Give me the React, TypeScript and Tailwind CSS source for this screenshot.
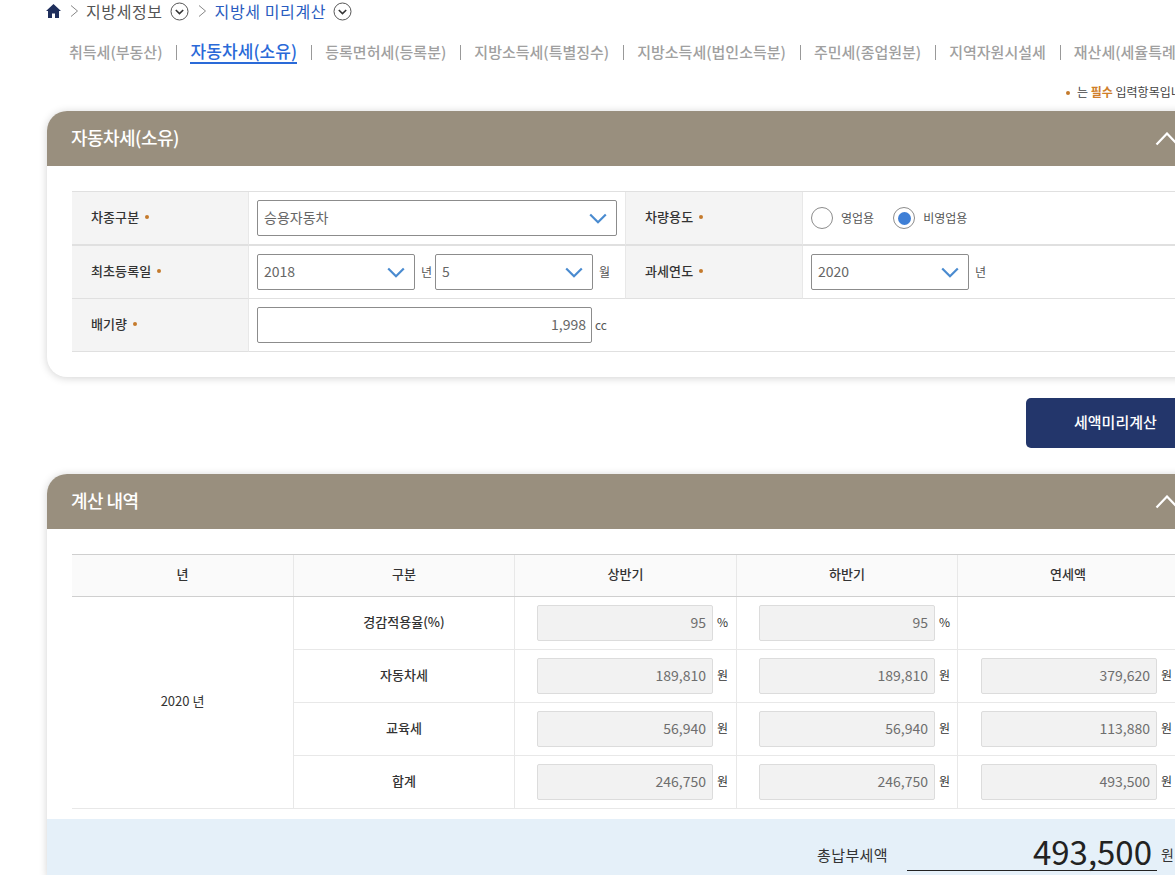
import type { ReactNode } from "react";

const FONT = "font-['Noto_Sans_CJK_KR','Noto_Sans',sans-serif]";

const tabs = [
  "취득세(부동산)",
  "자동차세(소유)",
  "등록면허세(등록분)",
  "지방소득세(특별징수)",
  "지방소득세(법인소득분)",
  "주민세(종업원분)",
  "지역자원시설세",
  "재산세(세율특례)",
];

const rows = [
  { label: "경감적용율(%)", unit: "%", first: "95", second: "95", total: "" },
  { label: "자동차세", unit: "원", first: "189,810", second: "189,810", total: "379,620" },
  { label: "교육세", unit: "원", first: "56,940", second: "56,940", total: "113,880" },
  { label: "합계", unit: "원", first: "246,750", second: "246,750", total: "493,500" },
];

function CircleDown() {
  return (
    <svg width="19" height="19" viewBox="0 0 19 19" fill="none" className="shrink-0">
      <circle cx="9.5" cy="9.5" r="8.5" stroke="#555" strokeWidth="1" />
      <path d="M5.8 8 9.5 11.6 13.2 8" stroke="#333" strokeWidth="1.6" />
    </svg>
  );
}

function Crumb() {
  return (
    <svg width="9" height="14" viewBox="0 0 9 14" fill="none" className="shrink-0">
      <path d="M1 1.5 7.5 7 1 12.5" stroke="#888" strokeWidth="1" />
    </svg>
  );
}

function Dot() {
  return <span className="ml-[6px] inline-block size-[4px] rounded-full bg-[#c47a2c]" />;
}

function Select({ value, width }: { value: string; width: string }) {
  return (
    <div className={`flex h-[36px] items-center justify-between rounded-[2px] border border-[#8c8c8c] bg-white pl-[6px] pr-[9px] ${width}`}>
      <span className="pb-[1px] text-[14px] text-[#666]">{value}</span>
      <svg width="18" height="11" viewBox="0 0 18 11" fill="none">
        <path d="M1.2 1.5 9 9.2 16.8 1.5" stroke="#4a8bd0" strokeWidth="2.2" />
      </svg>
    </div>
  );
}

function Radio({ label, checked }: { label: string; checked?: boolean }) {
  return (
    <div className="flex items-center gap-[8px]">
      <span className="flex size-[22px] items-center justify-center rounded-full border border-[#8c8c8c] bg-white">
        {checked && <span className="size-[13px] rounded-full bg-[#3f7fd6]" />}
      </span>
      <span className="pb-[1px] text-[12px] text-[#555]">{label}</span>
    </div>
  );
}

function Panel({ title, children }: { title: string; children: ReactNode }) {
  return (
    <section className="ml-[47px] w-[1200px] rounded-[20px] bg-white shadow-[0_1px_8px_rgba(0,0,0,0.18)]">
      <header className="flex h-[55px] items-center justify-between rounded-t-[20px] bg-[#998f7e] pl-[24px] pr-[68px]">
        <h2 className="pb-[3px] text-[18px] font-medium tracking-[-0.55px] text-white">{title}</h2>
        <svg width="24" height="14" viewBox="0 0 24 14" fill="none">
          <path d="M1.5 12.5 12 1.5 22.5 12.5" stroke="#fff" strokeWidth="2.2" />
        </svg>
      </header>
      {children}
    </section>
  );
}

function Label({ children, thick }: { children: ReactNode; thick?: boolean }) {
  return (
    <div
      className={`flex items-center border-r border-r-[#e8e8e8] border-b-[#e0e0e0] bg-[#f4f4f4] pb-[3px] pl-[19px] text-[13px] font-medium tracking-[0.1px] text-[#333] ${
        thick ? "border-b-2" : "border-b"
      }`}
    >
      {children}
      <Dot />
    </div>
  );
}

function ReadOnly({ value, unit, inset }: { value: string; unit: string; inset: string }) {
  return (
    <div className={`flex h-full items-center border-r border-[#e8e8e8] ${inset}`}>
      {value && (
        <>
          <div className="flex h-[36px] w-[176px] items-center justify-end rounded-[2px] border border-[#dcdcdc] bg-[#f2f2f2] pr-[6px] pb-[1px] text-[14px] text-[#6e6e6e]">
            {value}
          </div>
          <span className="ml-[4px] pb-[2px] text-[12px] text-[#333]">{unit}</span>
        </>
      )}
    </div>
  );
}

export default function App() {
  return (
    <div className={`relative h-[875px] w-[1175px] overflow-hidden bg-white ${FONT}`}>
      {/* Breadcrumb */}
      <nav className="flex h-[22px] items-center pl-[46px] text-[16px] tracking-[0.6px]">
        <svg width="15" height="14" viewBox="0 0 15 14" className="shrink-0">
          <path d="M7.5 0 15 7h-2v7H9V9.5H6V14H2V7H0z" fill="#1f2f5c" />
        </svg>
        <span className="ml-[9px]"><Crumb /></span>
        <span className="ml-[7px] text-[#555]">지방세정보</span>
        <span className="ml-[7px]"><CircleDown /></span>
        <span className="ml-[9px]"><Crumb /></span>
        <span className="ml-[8px] text-[#2a5cc0]">지방세 미리계산</span>
        <span className="ml-[7px]"><CircleDown /></span>
      </nav>

      {/* Tabs */}
      <ul className="mt-[18px] flex h-[24px] w-[1300px] items-center whitespace-nowrap pl-[69px] text-[15px] font-medium text-[#a0a0a0]">
        {tabs.map((tab, i) => (
          <li key={tab} className="flex items-center">
            {i > 0 && <span className="ml-[14px] mr-[13px] h-[15px] w-px bg-[#999]" />}
            {i === 1 ? (
              <span className="border-b-2 border-[#2a6ad8] text-[17px] leading-[22px] tracking-[0.1px] text-[#2a6ad8]">{tab}</span>
            ) : (
              <span>{tab}</span>
            )}
          </li>
        ))}
      </ul>

      <p className="mt-[18px] h-[20px] w-[200px] translate-x-[1066px] whitespace-nowrap text-[12px] leading-[20px] text-[#444]">
        <span className="mr-[7px] inline-block size-[4px] rounded-full bg-[#c47a2c] align-[2px]" />
        는 <span className="font-bold text-[#d07f2a]">필수</span> 입력항목입니다.
      </p>

      <div className="mt-[9px]">
        <Panel title="자동차세(소유)">
          <div className="p-[25px]">
            <div className="grid grid-cols-[177px_377px_177px_1fr] grid-rows-[54px_53px_53px] border-t border-[#e0e0e0]">
              <Label thick>차종구분</Label>
              <div className="flex items-center border-b-2 border-r border-b-[#e0e0e0] border-r-[#e8e8e8] pl-[8px]">
                <Select value="승용자동차" width="w-[360px]" />
              </div>
              <Label thick>차량용도</Label>
              <div className="flex items-center gap-[19px] border-b-2 border-[#e0e0e0] pl-[8px]">
                <Radio label="영업용" />
                <Radio label="비영업용" checked />
              </div>

              <Label>최초등록일</Label>
              <div className="flex items-center border-b border-r border-b-[#e0e0e0] border-r-[#e8e8e8] pl-[8px]">
                <Select value="2018" width="w-[158px]" />
                <span className="ml-[6px] text-[12px] text-[#555]">년</span>
                <span className="ml-[3px]"><Select value="5" width="w-[158px]" /></span>
                <span className="ml-[6px] text-[12px] text-[#555]">월</span>
              </div>
              <Label>과세연도</Label>
              <div className="flex items-center border-b border-[#e0e0e0] pl-[8px]">
                <Select value="2020" width="w-[158px]" />
                <span className="ml-[6px] text-[12px] text-[#555]">년</span>
              </div>

              <Label>배기량</Label>
              <div className="col-span-3 flex items-center border-b border-[#e0e0e0] pl-[8px]">
                <div className="flex h-[36px] w-[335px] items-center justify-end rounded-[2px] border border-[#8c8c8c] pr-[5px] pb-[1px] text-[14px] text-[#666]">
                  1,998
                </div>
                <span className="ml-[3px] text-[12px] text-[#555]">cc</span>
              </div>
            </div>
          </div>
        </Panel>
      </div>

      <div className="mt-[21px] flex h-[50px] pl-[1026px]">
        <button className="h-[50px] w-[200px] rounded-l-[5px] bg-[#23366b] pb-[2px] pl-[48px] text-left text-[15px] font-medium text-white">
          세액미리계산
        </button>
      </div>

      <div className="mt-[26px]">
        <Panel title="계산 내역">
          <div className="px-[25px] pt-[25px]">
            <div className="grid grid-cols-[222px_221px_222px_221px_221px] border-y border-[#cfcfcf] bg-[#fafafa] text-[13px] font-medium text-[#333]">
              {["년", "구분", "상반기", "하반기", "연세액"].map((h) => (
                <div key={h} className="flex h-[41px] items-center justify-center border-r border-[#e8e8e8] pb-[3px]">
                  {h}
                </div>
              ))}
            </div>
            <div className="grid grid-cols-[222px_221px_222px_221px_221px] auto-rows-[53px]">
              <div className="row-span-4 flex items-center justify-center border-r border-b border-[#e8e8e8] pb-[3px] text-[13px] text-[#333]">
                2020 년
              </div>
              {rows.map((row) => (
                <div key={row.label} className="col-span-4 grid grid-cols-subgrid border-b border-[#e8e8e8]">
                  <div className="flex items-center justify-center border-r border-[#e8e8e8] pb-[3px] text-[13px] font-medium text-[#333]">
                    {row.label}
                  </div>
                  <ReadOnly value={row.first} unit={row.unit} inset="pl-[22px]" />
                  <ReadOnly value={row.second} unit={row.unit} inset="pl-[22px]" />
                  <ReadOnly value={row.total} unit={row.unit} inset="pl-[23px]" />
                </div>
              ))}
            </div>
          </div>
          <div className="mt-[10px] flex h-[70px] items-start bg-[#e5f0f9] pl-[770px] pt-[13px]">
            <span className="mt-[12px] text-[15px] tracking-[0.4px] text-[#333]">총납부세액</span>
            <div className="ml-[19px] flex h-[39px] w-[250px] items-center justify-end border-b border-[#222] pr-[5px] text-[33px] leading-none text-[#222]">
              493,500
            </div>
            <span className="ml-[4px] mt-[12px] text-[14px] text-[#333]">원</span>
          </div>
        </Panel>
      </div>
    </div>
  );
}
